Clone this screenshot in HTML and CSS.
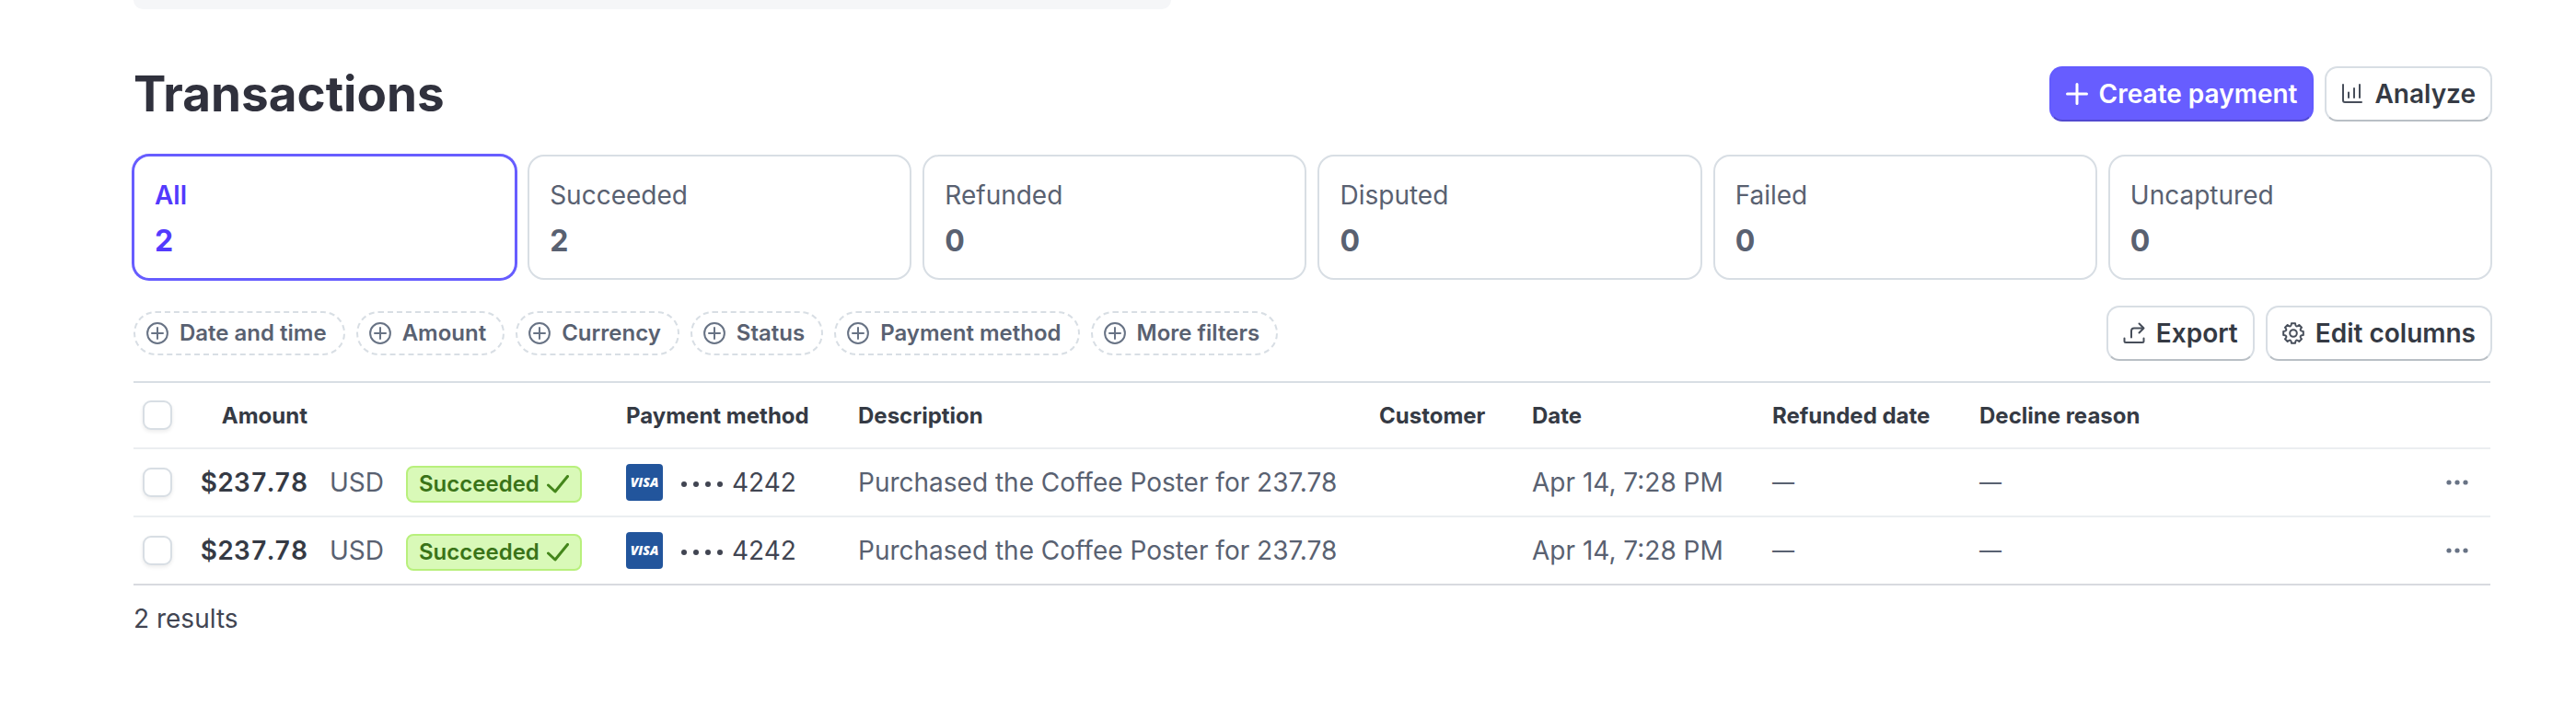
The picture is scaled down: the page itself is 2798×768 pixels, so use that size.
FILE: index.html
```html
<!DOCTYPE html>
<html lang="en">
<head>
<meta charset="utf-8">
<title>Transactions</title>
<link rel="stylesheet" href="styles.css">
</head>
<body>
<svg class="sprite" aria-hidden="true">
  <symbol id="i-plus" viewBox="0 0 24 24"><path d="M12 1.500v21M1.500 12h21"/></symbol>
  <symbol id="i-chart" viewBox="0 0 24 24"><path d="M2 2v17a2 2 0 0 0 2 2h18M8 10.500v5.500M14 6v10M20 2v14"/></symbol>
  <symbol id="i-export" viewBox="0 0 24 24"><path d="M1.500 17.500v3a1.500 1.500 0 0 0 1.500 1.500h18a1.500 1.500 0 0 0 1.500-1.500v-3M9 16.500V9.500a3 3 0 0 1 3-3h10M17.500 1.500l5 5-5 5"/></symbol>
  <symbol id="i-gear" viewBox="0 0 24 24"><circle cx="12" cy="12" r="3.800"/><path d="M14.060 1.200C14.300 4.900 15.700 5.400 18.300 3L21 5.700C18.600 8.300 19.100 9.700 22.800 9.940V14.060C19.100 14.300 18.600 15.700 21 18.300L18.300 21C15.700 18.600 14.300 19.100 14.060 22.800H9.940C9.700 19.100 8.300 18.600 5.700 21L3 18.300C5.400 15.700 4.900 14.300 1.200 14.060V9.940C4.900 9.700 5.400 8.300 3 5.700L5.700 3C8.300 5.400 9.700 4.900 9.940 1.200z"/></symbol>
  <symbol id="i-add" viewBox="0 0 24 24"><circle cx="12" cy="12" r="10.900"/><path d="M12 6v12M6 12h12"/></symbol>
  <symbol id="i-check" viewBox="0 0 24 20"><path d="M1.500 11l7.500 7L22.500 1.500"/></symbol>
  <symbol id="i-dots" viewBox="0 0 24 6"><circle cx="3" cy="3" r="2.600"/><circle cx="12" cy="3" r="2.600"/><circle cx="21" cy="3" r="2.600"/></symbol>
</svg>
<main class="page">
  <div class="panel-edge"></div>
  <header class="head">
    <h1 class="title">Transactions</h1>
    <div class="actions">
      <button class="btn btn-primary" type="button"><svg class="icon"><use href="#i-plus"/></svg>Create payment</button>
      <button class="btn" type="button"><svg class="icon"><use href="#i-chart"/></svg>Analyze</button>
    </div>
  </header>
  <div class="cards">
    <button class="card card-active" type="button"><span class="card-label">All</span><span class="card-count">2</span></button>
    <button class="card" type="button"><span class="card-label">Succeeded</span><span class="card-count">2</span></button>
    <button class="card" type="button"><span class="card-label">Refunded</span><span class="card-count">0</span></button>
    <button class="card" type="button"><span class="card-label">Disputed</span><span class="card-count">0</span></button>
    <button class="card" type="button"><span class="card-label">Failed</span><span class="card-count">0</span></button>
    <button class="card" type="button"><span class="card-label">Uncaptured</span><span class="card-count">0</span></button>
  </div>
  <div class="toolbar">
    <div class="filters">
      <button class="chip" type="button"><svg class="icon"><use href="#i-add"/></svg>Date and time</button>
      <button class="chip" type="button"><svg class="icon"><use href="#i-add"/></svg>Amount</button>
      <button class="chip" type="button"><svg class="icon"><use href="#i-add"/></svg>Currency</button>
      <button class="chip" type="button"><svg class="icon"><use href="#i-add"/></svg>Status</button>
      <button class="chip" type="button"><svg class="icon"><use href="#i-add"/></svg>Payment method</button>
      <button class="chip" type="button"><svg class="icon"><use href="#i-add"/></svg>More filters</button>
    </div>
    <div class="actions">
      <button class="btn" type="button"><svg class="icon"><use href="#i-export"/></svg>Export</button>
      <button class="btn" type="button"><svg class="icon"><use href="#i-gear"/></svg>Edit columns</button>
    </div>
  </div>
  <table class="table">
    <colgroup>
      <col class="c-check"><col class="c-amount"><col class="c-currency"><col class="c-status"><col class="c-method"><col class="c-desc"><col class="c-customer"><col class="c-date"><col class="c-refund"><col><col class="c-menu">
    </colgroup>
    <thead>
      <tr>
        <th class="check"><input class="box" type="checkbox" aria-label="Select all"></th>
        <th class="amount">Amount</th><th></th><th></th>
        <th>Payment method</th><th>Description</th><th>Customer</th><th>Date</th><th>Refunded date</th><th>Decline reason</th><th></th>
      </tr>
    </thead>
    <tbody>
      <tr>
        <td class="check"><input class="box" type="checkbox" aria-label="Select payment 1"></td>
        <td class="amount">$237.78</td>
        <td class="currency">USD</td>
        <td><span class="badge">Succeeded<svg class="tick"><use href="#i-check"/></svg></span></td>
        <td><span class="method"><span class="visa">VISA</span><span class="mask"><i></i><i></i><i></i><i></i></span>4242</span></td>
        <td>Purchased the Coffee Poster for 237.78</td>
        <td></td>
        <td>Apr 14, 7:28 PM</td>
        <td class="empty">—</td>
        <td class="empty">—</td>
        <td class="menu"><button class="more" type="button" aria-label="More actions"><svg class="dots"><use href="#i-dots"/></svg></button></td>
      </tr>
      <tr>
        <td class="check"><input class="box" type="checkbox" aria-label="Select payment 2"></td>
        <td class="amount">$237.78</td>
        <td class="currency">USD</td>
        <td><span class="badge">Succeeded<svg class="tick"><use href="#i-check"/></svg></span></td>
        <td><span class="method"><span class="visa">VISA</span><span class="mask"><i></i><i></i><i></i><i></i></span>4242</span></td>
        <td>Purchased the Coffee Poster for 237.78</td>
        <td></td>
        <td>Apr 14, 7:28 PM</td>
        <td class="empty">—</td>
        <td class="empty">—</td>
        <td class="menu"><button class="more" type="button" aria-label="More actions"><svg class="dots"><use href="#i-dots"/></svg></button></td>
      </tr>
    </tbody>
  </table>
  <footer class="results">2 results</footer>
</main>
</body>
</html>
```
FILE: styles.css
```css
* { box-sizing: border-box; }
body {
  margin: 0;
  background: #fff;
  color: #596171;
  font-family: Inter, "Liberation Sans", sans-serif;
  font-size: 28px;
  line-height: 40px;
}
button { font: inherit; color: inherit; cursor: pointer; }
.sprite { display: none; }
.page { padding: 0 91px 0 145px; }

.panel-edge {
  width: 44%;
  height: 10px;
  border-radius: 0 0 12px 12px;
  background: #f5f6f8;
}

.head {
  display: flex;
  align-items: center;
  justify-content: space-between;
  margin-top: 62px;
}
.title {
  margin: 0;
  color: #30313d;
  font-size: 53px;
  font-weight: 700;
  line-height: 62px;
}
.head { height: 60px; }
.actions { display: flex; gap: 12px; }
.icon {
  flex: none;
  width: 24px;
  height: 24px;
  fill: none;
  stroke: currentColor;
  stroke-width: 2;
  stroke-linecap: round;
  stroke-linejoin: round;
}
.btn {
  display: flex;
  align-items: center;
  gap: 12px;
  height: 60px;
  padding: 0 16px;
  border: 2px solid #d8dee4;
  border-bottom-color: #b9bfc5;
  border-radius: 14px;
  background: #fff;
  color: #353a44;
  font-weight: 600;
  white-space: nowrap;
}
.btn .icon { color: #474e5a; }
.btn-primary {
  border-color: #635bff;
  border-bottom-color: #5249d0;
  background: #675dff;
  color: #fff;
}
.btn-primary .icon { color: #fff; stroke-width: 3; }

.cards {
  display: grid;
  grid-template-columns: repeat(6, 1fr);
  gap: 12px;
  margin: 36px 0 0 -1px;
}
.card {
  display: flex;
  flex-direction: column;
  gap: 10px;
  padding: 22px 22px 20px;
  border: 2px solid #d8dee4;
  border-radius: 18px;
  background: #fff;
  text-align: left;
}
.card-count { font-size: 32px; font-weight: 700; }
.card-active {
  border-color: #675dff;
  color: #533afd;
  box-shadow: 0 0 0 1px #675dff;
}
.card-active .card-label { font-weight: 600; }

.toolbar {
  display: flex;
  align-items: center;
  justify-content: space-between;
  margin-top: 28px;
}
.filters { display: flex; gap: 12px; }
.chip {
  display: flex;
  align-items: center;
  gap: 12px;
  height: 48px;
  padding: 0 18px 0 12px;
  border: 2px dashed #d8dee4;
  border-radius: 24px;
  background: #fff;
  font-size: 24px;
  font-weight: 600;
  white-space: nowrap;
}
.chip .icon { color: #687385; }

.table {
  width: calc(100% - 2px);
  margin-top: 22px;
  border-collapse: separate;
  border-spacing: 0;
  border-top: 2px solid #d8dee4;
  border-bottom: 2px solid #d8dadf;
  table-layout: fixed;
  white-space: nowrap;
}
.c-check { width: 60px; }
.c-amount { width: 143px; }
.c-currency { width: 79px; }
.c-status { width: 239px; }
.c-method { width: 252px; }
.c-desc { width: 566px; }
.c-customer { width: 166px; }
.c-date { width: 261px; }
.c-refund { width: 225px; }
.c-menu { width: 80px; }
.table th, .table td {
  height: 74px;
  padding: 0 14px;
  border-bottom: 2px solid #ebeef1;
  text-align: left;
  vertical-align: middle;
}
.table th {
  height: 72px;
  padding-top: 2px;
  color: #353a44;
  font-size: 24px;
  font-weight: 700;
}
.table tbody tr:last-child td { height: 72px; border-bottom: 0; }
.table .amount { padding-left: 0; text-align: right; }
.table td.amount { color: #353a44; font-weight: 600; }
.amount { font-variant-numeric: tabular-nums; }
.table .currency { padding: 0 10px; }
.table .check { padding: 0 10px; }
.table .empty { font-size: 24px; }
.box {
  display: block;
  appearance: none;
  width: 32px;
  height: 32px;
  margin: 0;
  border: 2px solid #d8dee4;
  border-radius: 9px;
  background: #fff;
  box-shadow: 0 2px 4px rgba(0, 0, 0, .08);
}
.badge {
  display: flex;
  align-items: center;
  gap: 8px;
  width: max-content;
  height: 40px;
  margin-top: 4px;
  padding: 0 12px;
  border: 2px solid #b8f07c;
  border-radius: 8px;
  background: #d9f9b8;
  color: #3a7318;
  font-size: 24px;
  font-weight: 600;
}
.tick {
  width: 24px;
  height: 20px;
  fill: none;
  stroke: #44861b;
  stroke-width: 3;
  stroke-linecap: round;
  stroke-linejoin: round;
}
.method { display: flex; align-items: center; color: #414552; }
.visa {
  width: 40px;
  height: 40px;
  border-radius: 4px;
  background: #22559c;
  color: #fff;
  font-family: "Open Sans", sans-serif;
  font-size: 14px;
  font-style: italic;
  font-weight: 800;
  text-align: center;
}
.mask { display: flex; gap: 7px; margin: 4px 10px 0 20px; }
.mask i { width: 6px; height: 6px; border-radius: 50%; background: #414552; }
.table .menu { padding-right: 16px; }
.more {
  display: block;
  margin-left: auto;
  padding: 8px;
  border: 0;
  background: none;
  color: #687385;
}
.dots { display: block; width: 24px; height: 6px; fill: currentColor; }

.results { padding: 16px 0; color: #414552; }
```
